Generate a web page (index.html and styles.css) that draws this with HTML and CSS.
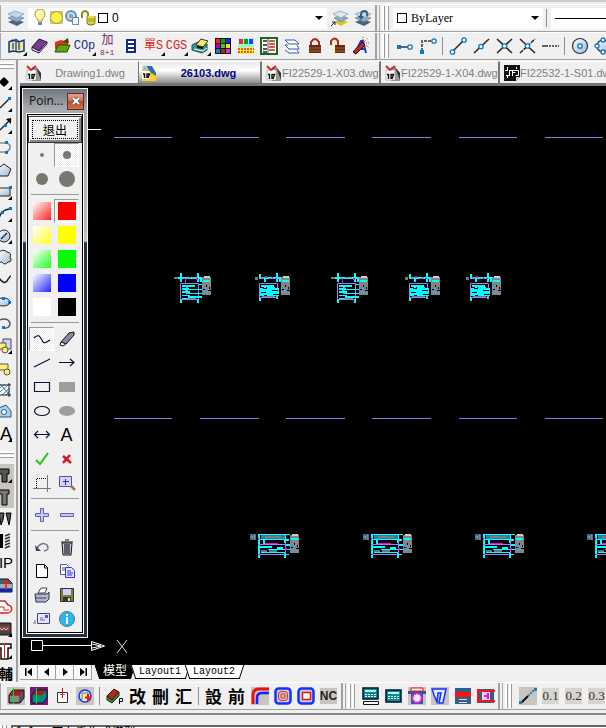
FILE: index.html
```html
<!DOCTYPE html>
<html lang="zh-Hant">
<head>
<meta charset="utf-8">
<title>26103.dwg</title>
<link rel="stylesheet" href="styles.css">
</head>
<body>
<svg class="defs" aria-hidden="true">
  <defs>
    <linearGradient id="steel" x1="0" y1="0" x2="1" y2="1"><stop offset="0" stop-color="#fff"/><stop offset="1" stop-color="#9db7d2"/></linearGradient>
    <symbol id="sheets" viewBox="0 0 18 18"><path d="M1 13l7-3 9 3-7 4z" fill="#49657f"/><path d="M1 9l7-3 9 3-7 4z" fill="#8faac0" stroke="#5f7a92" stroke-width=".6"/><path d="M1 5l7-3 9 3-7 4z" fill="#c5d7e4" stroke="#7790a6" stroke-width=".6"/></symbol>
    <symbol id="dwg" viewBox="0 0 16 16"><path d="M6 2h4l5 6v8H6z" fill="#999"/><path d="M10 2l5 6v7z" fill="#333"/><path d="M1 5h9v10H1z" fill="#fff" stroke="#999" stroke-width=".6"/><path d="M2 9.500h1.500V14M6 14V9.500h2.500L7 14" fill="none" stroke="#111" stroke-width="1.400"/><path d="M1 1l4 4 5-4" fill="none" stroke="#d2232a" stroke-width="1.800"/></symbol>
    <g id="panel"><path d="M0 1h9v18H0z" fill="#858585"/><path d="M2 0h6v2H2z" fill="#d0ccc8"/><path d="M1 4h7v2H1z" fill="#0ff"/><path d="M0 8h1v5H0zM2 12h4v1H2zM1 15h5v2H1z" fill="#5c94d0"/><path d="M4 9h1v2H4zM7 11h1v2H7zM1 13h2v1H1zM6 14h3v1H6z" fill="#000"/></g>
    <g id="unitStripe">
      <path d="M-6 4h4v2h-4z" fill="#6c7c8c"/><path d="M-2 4h26v2H-2zM0 0h2v9H0zM17 0h2v9h-2zM20 6h3v3h-3zM0 26h2v4H0zM17 26h2v4h-2z" fill="#0ff"/>
      <path d="M3 5h5v1H3zM12 4h3v1h-3z" fill="#8090a0"/><path d="M5 6h1v4H5zM9 4h2v1H9zM16 5h2v2h-2z" fill="#f0f"/>
      <path d="M.5 10.500h18v16H.5z" fill="none" stroke="#9a80ff"/><path d="M2 12h13v2H2zM2 15h7v2H2zM9 16h13v1H9zM2 18h8v2H2zM8 20h14v1H8zM2 22h8v1H2zM8 23h14v2H8zM2 25h6v1H2zM19 11h3v1h-3z" fill="#0ff"/><path d="M6 14h2v1H6zM5 17h3v1H5zM6 20h2v1H6z" fill="#9a80ff"/><path d="M8 25h8v1H8z" fill="#777"/>
      <use href="#panel" x="22" y="3"/>
    </g>
    <g id="unitFull">
      <path d="M-4 4h3v3h-3z" fill="#6c7c8c"/><path d="M0 4h22v2H0zM0 1h2v5H0zM17 0h2v9h-2zM5 6h2v3H5zM20 5h2v4h-2zM0 24h2v4H0zM17 23h2v3h-2z" fill="#0ff"/>
      <path d="M2 4h3v2H2zM10 5h5v1h-5z" fill="#8090a0"/><path d="M6 3h2v2H6zM13 4h1v1h-1zM16 5h2v1h-2z" fill="#f0f"/>
      <path d="M.5 10.500h18v14H.5z" fill="none" stroke="#9a80ff"/><path d="M2 12h13v2H2zM1 15h19v8H1zM8 14h8v1H8z" fill="#0ff"/><path d="M4 15h4v1H4zM2 19h5v1H2zM13 17h6v1h-6zM14 21h7v1h-7zM5 22h3v1H5z" fill="#000"/><path d="M3 23h13v1H3z" fill="#777"/><path d="M5 14h2v1H5zM17 15h2v2h-2z" fill="#c8b8ff"/>
      <use href="#panel" x="22" y="3"/>
    </g>
    <g id="rack">
      <path d="M-8 0h6v6h-6z" fill="#4a6c90"/><path d="M-7 2h2v2h-2zM-4 1h1v4h-1z" fill="#8a9098"/>
      <path d="M0 0h32v1H0zM0 0h2v24H0zM0 5h27v1H0zM26 1h2v8h-2zM26 18h2v6h-2zM28 5h3v2h-3zM5 6h2v4H5z" fill="#0ff"/><path d="M3 1h24v4H3z" fill="#4c719b"/><path d="M7 2h16v2H7z" fill="#777f86"/>
      <path d="M0 10.500h31M0 20.500h28M27.500 8v13" stroke="#9a80ff"/><path d="M1 12h13v2H1zM19 13h6v2h-6zM10 15h22v1H10zM3 18h24v1H3zM28 10h4v2h-4zM27 20h4v1h-4z" fill="#0ff"/><path d="M7 9h13v1H7zM0 4h1v2H0zM0 20h2v1H0zM27 14h2v2h-2z" fill="#f0f"/><path d="M3 16h6v2H3zM11 16h8v2h-8z" fill="#5a79a0"/>
      <use href="#panel" x="32"/>
    </g>
  </defs>
</svg>

<header class="bars">
  <div class="bar">
    <section class="group group-main">
      <button class="tool" aria-label="Layer properties"><svg><use href="#sheets"/></svg></button>
      <div class="combo combo-layer">
        <svg viewBox="0 0 16 18"><path d="M6 12c0-3-3-3-3-7a5 5 0 0 1 10 0c0 4-3 4-3 7z" fill="#fff9a0" stroke="#a09040"/><path d="M6 13h4v3H6z" fill="#7888a0"/><path d="M5 6q1-3 3-3" stroke="#fff" fill="none"/></svg>
        <svg viewBox="0 0 16 18"><path d="M2 2h13v13H2z" fill="#dfc95a"/><circle cx="8.500" cy="8.500" r="6" fill="#ffee45" stroke="#50907c" stroke-width=".8"/></svg>
        <svg viewBox="0 0 16 18"><circle cx="7" cy="7" r="5" fill="#c7d8e7" stroke="#6b93b8" stroke-width="2"/><circle cx="7" cy="7" r="2" fill="#7ca0bf"/><path d="M8.500 8.500h6v7h-6z" fill="#f8fafc" stroke="#71879c"/></svg>
        <svg viewBox="0 0 16 18"><path d="M2 9V4q3-4 6 0v6" fill="none" stroke="#8f8a25" stroke-width="2"/><ellipse cx="11" cy="14" rx="4" ry="2" fill="#d4cb30" stroke="#777212"/><path d="M7 7h8v7H7z" fill="#e7df4b"/><path d="M7 7v7M15 7v7M7 10h8M7 12h8" stroke="#8d871e"/></svg>
        <i class="swatch"></i>
        <select aria-label="Layer"><option>0</option></select>
        <svg class="caret" viewBox="0 0 8 4"><path d="M0 0h8L4 4z"/></svg>
      </div>
      <button class="tool" aria-label="Make layer current"><svg viewBox="0 0 18 18"><path d="M3 13l6-3 8 3-7 4z" fill="#d9c426"/><path d="M3 9l6-3 8 3-7 4z" fill="#8faac0" stroke="#5f7a92" stroke-width=".6"/><path d="M2 5l7-3 8 3-7 4z" fill="#dbe8ef" stroke="#7790a6" stroke-width=".6"/><path d="M0 17l4-4M1 13h3v3" stroke="#125" fill="none"/></svg></button>
      <button class="tool" aria-label="Layer previous"><svg viewBox="0 0 18 18"><use href="#sheets"/><path d="M7 8V6q0-4 4-4 3 1 2 5" fill="none" stroke="#315c84" stroke-width="2"/><path d="M4 7h6l-3 4z" fill="#315c84"/></svg></button>
    </section>
    <section class="group group-rest">
      <i class="grip"></i>
      <div class="combo combo-color"><i class="swatch"></i><select class="serif" aria-label="Colour"><option>ByLayer</option></select><svg class="caret" viewBox="0 0 8 4"><path d="M0 0h8L4 4z"/></svg></div>
      <i class="sep"></i>
      <div class="combo combo-line"><i class="rule"></i><select aria-label="Linetype"><option></option></select></div>
    </section>
  </div>
  <div class="bar">
    <section class="group group-main">
      <button class="tool fly" aria-label="Library"><svg viewBox="0 0 18 18"><path d="M2 5l4-2 6 2 5-2v11l-5 1-6-1-4 1z" fill="#ffe873" stroke="#113292" stroke-width="1.500"/><path d="M9 3v11M6 6v6M12 6v7" stroke="#175bc4" stroke-width="1.500"/><path d="M5 5l4-3 4 3" fill="none" stroke="#113292"/></svg></button>
      <button class="tool" aria-label="Erase"><svg viewBox="0 0 18 18"><path d="M2 10l7-8 8 3-8 9z" fill="#783a91" stroke="#321547"/><path d="M2 10v3l7 3 8-9V5l-8 9z" fill="#dacce2" stroke="#321547"/></svg></button>
      <button class="tool" aria-label="Open"><svg viewBox="0 0 18 18"><path d="M2 5l6-2 7 2v7H2z" fill="#e7330e"/><path d="M9 5l6-4 1 5z" fill="#251"/><path d="M2 15l3-7h12l-3 7z" fill="#5ba812" stroke="#254d0a"/></svg></button>
      <button class="tool glyph blue fly">COp</button>
      <button class="tool glyph cjk violet">加<small>8+1</small></button>
      <button class="tool" aria-label="List"><svg viewBox="0 0 18 18"><path d="M5 3h8v12H5zM5 7h8M5 11h8" fill="#fff" stroke="#102a86" stroke-width="2"/></svg></button>
      <button class="tool glyph cjk red fly">單S</button>
      <button class="tool glyph red fly">CGS</button>
      <button class="tool fly" aria-label="Print"><svg viewBox="0 0 18 18"><path d="M1 8l6-3 9 2v6l-5 3-10-3z" fill="#3d8f92" stroke="#155"/><path d="M5 8l5-6 7 2-5 6z" fill="#ffe96a" stroke="#332"/><path d="M6 10l6 1" stroke="#111" stroke-width="2"/><path d="M3 12l9 2 4-3" stroke="#fff" fill="none"/></svg></button>
      <button class="tool" aria-label="Colour map"><svg viewBox="0 0 18 18"><path d="M1 1h16v16H1z" fill="#121212"/><path d="M2 2h4v4H2z" fill="#f22"/><path d="M7 2h4v4H7z" fill="#0a0"/><path d="M12 2h4v4h-4z" fill="#22f"/><path d="M2 7h4v4H2z" fill="#b0a"/><path d="M7 7h4v4H7z" fill="#3c3"/><path d="M12 7h4v4h-4z" fill="#fd0"/><path d="M2 12h4v4H2z" fill="#08c"/><path d="M7 12h4v4H7z" fill="#930"/><path d="M12 12h4v4h-4z" fill="#e2e"/></svg></button>
      <button class="tool" aria-label="Colour bands"><svg viewBox="0 0 18 18"><path d="M1 1h16v16H1z" fill="#ffeb35"/><path d="M1 1h16v7H1z" fill="#9ff"/><path d="M2 2h4v5H2z" fill="#f22"/><path d="M7 2h4v5H7z" fill="#169516"/><path d="M12 2h4v5h-4z" fill="#33f"/><path d="M1 9h16" stroke="#7ff" stroke-width="2"/><path d="M1 12h16M1 15h16" stroke="#e3262b" stroke-width="1.500" stroke-dasharray="2 1"/></svg></button>
      <button class="tool" aria-label="Table"><svg viewBox="0 0 18 18"><path d="M1 1h16v16H1z" fill="#fff" stroke="#17691e" stroke-width="2"/><path d="M3 4h4M3 8h4M3 12h4M3 15h4" stroke="#555" stroke-width="2"/><path d="M9 4h6M9 7h6M9 10h6M9 13h6" stroke="#d55" stroke-width="2"/><path d="M8 2v14" stroke="#555"/></svg></button>
      <button class="tool" aria-label="Layers"><svg viewBox="0 0 18 18"><path d="M2 3h10l4 4H6zM2 8h3M2 8l4 4h10l-2-4M2 13l4 3h10l-2-3" fill="#fff" stroke="#315cb6"/></svg></button>
      <button class="tool" aria-label="Lock"><svg viewBox="0 0 18 18"><path d="M5 9V5q4-6 8 0v4" fill="none" stroke="#a92a22" stroke-width="2"/><path d="M3 8h12v8H3z" fill="#662a14"/><path d="M3 11h12M3 14h12" stroke="#9b6731"/></svg></button>
      <button class="tool" aria-label="Unlock"><svg viewBox="0 0 18 18"><path d="M2 1h15v16H2z" fill="#f5edd6"/><path d="M2 8V4q4-5 7 0v4" fill="none" stroke="#a92a22" stroke-width="2"/><path d="M6 8h10v8H6z" fill="#662a14"/><path d="M6 11h10M6 14h10" stroke="#9b6731"/></svg></button>
      <button class="tool" aria-label="Match text"><svg viewBox="0 0 18 18"><path d="M3 16L9 4h2l3 12M6 12h7" fill="none" stroke="#133dd1" stroke-width="2"/><path d="M1 15L10 5l3 3-9 9z" fill="#b12b23" stroke="#401"/><path d="M12 5l4-4M14 6h4M11 3V0M14 8l3 3" stroke="#d32" stroke-dasharray="1 1"/></svg></button>
    </section>
    <section class="group group-rest">
      <i class="grip"></i>
      <button class="tool" aria-label="Temporary track"><svg viewBox="0 0 18 18"><path d="M4 10h8" stroke="#333" stroke-width="1.500"/><path d="M1 8h4v4H1z" fill="#0878c8"/><circle cx="14" cy="10" r="2.200" class="node"/></svg></button>
      <button class="tool" aria-label="Snap from"><svg viewBox="0 0 18 18"><path d="M3 14V4h10" fill="none" stroke="#333" stroke-width="1.500" stroke-dasharray="3 1"/><path d="M1 13h4v4H1z" fill="#0878c8"/><circle cx="15" cy="4" r="2.200" class="node"/></svg></button>
      <i class="sep"></i>
      <button class="tool" aria-label="Endpoint"><svg viewBox="0 0 18 18"><path d="M3 15L15 3" stroke="#222" stroke-width="1.500"/><circle cx="3.500" cy="15" r="2.200" class="node"/><circle cx="15" cy="3" r="2.200" class="node"/></svg></button>
      <button class="tool" aria-label="Midpoint"><svg viewBox="0 0 18 18"><path d="M2 16L17 2" stroke="#222" stroke-width="1.500"/><circle cx="9" cy="9.500" r="2.200" class="node"/></svg></button>
      <button class="tool" aria-label="Intersection"><svg viewBox="0 0 18 18"><path d="M2 2l15 14M2 16L17 2" stroke="#222" stroke-width="1.500"/><circle cx="9.500" cy="9" r="2.200" class="node"/></svg></button>
      <button class="tool" aria-label="Apparent intersection"><svg viewBox="0 0 18 18"><path d="M2 2l15 14" stroke="#222" stroke-width="1.500"/><path d="M2 16L17 2" stroke="#222" stroke-width="1.500" stroke-dasharray="4 1"/><circle cx="9.500" cy="9" r="2.200" class="node"/></svg></button>
      <button class="tool" aria-label="Extension"><svg viewBox="0 0 18 18"><path d="M1 9h6" stroke="#333" stroke-width="1.500"/><path d="M8 9h10" stroke="#333" stroke-width="1.500" stroke-dasharray="2 1"/></svg></button>
      <i class="sep"></i>
      <button class="tool" aria-label="Centre"><svg viewBox="0 0 18 18"><circle cx="9" cy="9" r="7.500" fill="url(#steel)" stroke="#233646" stroke-width="1.200"/><circle cx="9" cy="9" r="2.200" class="node"/></svg></button>
      <button class="tool" aria-label="Quadrant"><svg viewBox="0 0 18 18"><circle cx="9" cy="9" r="6" fill="url(#steel)" stroke="#233646" stroke-width="1.200"/><g class="node"><circle cx="9" cy="3" r="2"/><circle cx="15" cy="9" r="2"/><circle cx="9" cy="15" r="2"/><circle cx="3" cy="9" r="2"/></g></svg></button>
    </section>
  </div>
</header>

<main class="work">
  <aside class="side">
    <div class="hgrip"></div>
    <button aria-label="Point"><svg viewBox="0 0 14 22"><circle cx="4" cy="11" r="3.500"/><path d="M4 6l5 5-5 5-5-5z"/></svg></button>
    <button aria-label="Line"><svg viewBox="0 0 14 22"><path d="M0 15L9 6" class="ink"/><path d="M8 4h3v3H8z" class="pt"/></svg></button>
    <button aria-label="Ray"><svg viewBox="0 0 14 22"><path d="M0 15L11 4" class="ink"/><path d="M11 3v6L6 4z"/><path d="M4 9h3v3H4z" class="pt"/></svg></button>
    <button aria-label="Polyline" class="plain"><svg viewBox="0 0 14 22"><path d="M0 6h6q5 1 4 5t-6 4H0" fill="none" stroke="#888" stroke-width="1.500"/><path d="M5 4h3v3H5zM5 14h3v3H5z" class="pt"/></svg></button>
    <button aria-label="Polygon" class="plain"><svg viewBox="0 0 14 22"><path d="M4 5l7 5-3 7H0l-3-7z" fill="url(#steel)" stroke="#222"/></svg></button>
    <button aria-label="Rectangle"><svg viewBox="0 0 14 22"><path d="M-2 7h12v8H-2z" fill="url(#steel)" stroke="#222"/><path d="M9 5h3v3H9z" class="pt"/></svg></button>
    <button aria-label="Arc"><svg viewBox="0 0 14 22"><path d="M-1 16Q0 7 10 6" class="ink"/><path d="M9 4h3v3H9zM1 8h3v3H1z" class="pt"/></svg></button>
    <button aria-label="Circle"><svg viewBox="0 0 14 22"><circle cx="4" cy="11" r="6" fill="url(#steel)" stroke="#222"/><path d="M1 14l6-6" class="ink"/><path d="M3 10h2v2H3z" class="pt"/></svg></button>
    <button aria-label="Revision cloud" class="plain"><svg viewBox="0 0 14 22"><path d="M-2 6q5-5 9-1 5 1 3 5 3 5-2 5-3 4-6 0-4 1-4-3z" fill="url(#steel)" stroke="#222"/></svg></button>
    <button aria-label="Spline" class="plain"><svg viewBox="0 0 14 22"><path d="M-1 9q5 7 8 3 3-5 4-5" class="ink"/></svg></button>
    <button aria-label="Ellipse" class="plain"><svg viewBox="0 0 14 22"><ellipse cx="3" cy="11" rx="7" ry="4" fill="url(#steel)" stroke="#222"/><path d="M8 10h3v3H8zM2 6h3v3H2z" class="pt"/></svg></button>
    <button aria-label="Ellipse arc" class="plain"><svg viewBox="0 0 14 22"><path d="M-1 7q9-3 11 3 0 6-7 5" fill="#e9eff6" stroke="#555" stroke-width="1.500"/><path d="M2 13h3v3H2z" class="pt"/></svg></button>
    <button aria-label="Insert block"><svg viewBox="0 0 14 22"><path d="M3 4h8v10H3z" fill="#c7d9ea" stroke="#446"/><path d="M-1 8h7v6h-7z" fill="#ffec75" stroke="#554"/><circle cx="5" cy="15" r="3" fill="#ffec75" stroke="#554"/></svg></button>
    <button aria-label="Make block" class="plain"><svg viewBox="0 0 14 22"><path d="M-1 7h9v6h-9z" fill="#ffec75" stroke="#554"/><circle cx="7" cy="15" r="3" fill="#ffec75" stroke="#554"/></svg></button>
    <button aria-label="Hatch" class="plain"><svg viewBox="0 0 14 22"><path d="M0 6h9v9H0z" fill="#fff"/><path d="M0 9l5-4M0 13l9-8M2 16l8-7M6 16l4-4M0 5l10 11" stroke="#367ab8"/><path d="M-1 6h12M-1 16h12M9 4v14" stroke="#222"/></svg></button>
    <button aria-label="Region" class="plain"><svg viewBox="0 0 14 22"><path d="M-1 16V7l7-3 5 6v6z" fill="#aecde8" stroke="#235989"/><circle cx="4" cy="11" r="2.500" fill="#fff" stroke="#235989"/></svg></button>
    <button class="letter">A</button>
    <div class="hgrip hgrip-lower"></div>
    <button aria-label="Bolt"><svg viewBox="0 0 14 22" class="shade"><path d="M-1 5h10v5H7v8H2v-8h-3z" fill="#555" stroke="#000"/></svg></button>
    <button aria-label="Pin" class="plain"><svg viewBox="0 0 14 22" class="shade"><path d="M-1 4h10v4H7v11H2V8h-3z" fill="#777" stroke="#000"/></svg></button>
    <button aria-label="Taps" class="plain"><svg viewBox="0 0 14 22"><path d="M-1 5h5l-1 7-2 5zM6 5h5l-1 7-1 5z" fill="#555" stroke="#000"/></svg></button>
    <button aria-label="Spring" class="plain"><svg viewBox="0 0 14 22"><path d="M0 4h3v14H0z"/><path d="M5 6l5-2M5 9l5-2M5 12l5-2M5 15l5-2M5 18l5-2" stroke="#333" stroke-width="1.500"/></svg></button>
    <button class="letter plain mark">IP</button>
    <button aria-label="Raise" class="plain"><svg viewBox="0 0 14 22"><path d="M-1 5h9l4 4v9H-1z" fill="#23706f" stroke="#013"/><path d="M-1 15h12v2H-1z" fill="#11f"/><path d="M0 10h12v4H0z" fill="#aaa"/><path d="M6 16V6M3 9l3-3 3 3" fill="none" stroke="#f11" stroke-width="1.500"/></svg></button>
    <button aria-label="Profile" class="plain"><svg viewBox="0 0 14 22"><path d="M-1 5h6l3 4q5 1 3 6-1 2-4 2h-8" fill="#fff" stroke="#d22" stroke-width="1.500"/><path d="M-1 11h5v3h5" fill="none" stroke="#d22"/></svg></button>
    <button aria-label="Plate"><svg viewBox="0 0 14 22"><path d="M-1 5h12v12H-1z" fill="#444" stroke="#111"/><path d="M-1 8h11v5H-1z" fill="#844"/><path d="M0 10l2 2 2-2 2 2 2-2" stroke="#ccc" fill="none"/></svg></button>
    <button aria-label="Section"><svg viewBox="0 0 14 22"><path d="M-1 4h12v4H8v11H1V8h-2z" fill="#fff" stroke="#111" stroke-width="1.500"/><path d="M4.500 3v16" stroke="#f11"/></svg></button>
    <button class="letter assist">輔</button>
  </aside>

  <section class="document">
    <nav class="tabs">
      <a href="#" class="tab"><svg><use href="#dwg"/></svg><span>Drawing1.dwg</span></a>
      <a href="#" class="tab active"><svg viewBox="0 0 16 16"><path d="M1 4h10l4 5v7H1z" fill="#ffd21c"/><path d="M5 1h6l4 7v3l-6-4z" fill="#2d6fab"/><path d="M1 6h8v8H1z" fill="#fff"/><path d="M2 9h1.500v4M6 13V9h2.500L7 13" fill="none" stroke="#111" stroke-width="1.500"/><path d="M4 0v6M1 3h6M2 1l4 4M6 1L2 5" stroke="#8ab6dc"/></svg><span>26103.dwg</span></a>
      <a href="#" class="tab tight"><svg><use href="#dwg"/></svg><span>FI22529-1-X03.dwg</span></a>
      <a href="#" class="tab tight"><svg><use href="#dwg"/></svg><span>FI22529-1-X04.dwg</span></a>
      <a href="#" class="tab tight"><svg viewBox="0 0 16 16"><path d="M0 0h16v12l-4 4H0z" fill="#111"/><path d="M1 5.500h3M3.500 2v4M12.500 2v2M5.500 5.500h9v5h-3M5.500 5v6M8.500 7.500h3M8.500 5v6M2 10.500h3M3.500 10v3" fill="none" stroke="#fff"/><path d="M12 16v-4h4z" fill="#ddd"/></svg><span>FI22532-1-S01.dwg</span></a>
    </nav>

    <div class="canvas">
      <svg class="drawing" role="img" aria-label="Model space drawing">
        <g transform="translate(-20 -86)">
          <path d="M88 129.500h13" stroke="#fff"/>
          <path id="axis" d="M114 137.500h58M200 137.500h59M286 137.500h59M372 137.500h59M459 137.500h58M545 137.500h58" stroke="#8f78ec"/>
          <use href="#axis" y="281"/>
          <use href="#unitStripe" x="180" y="273"/>
          <use href="#unitFull" x="259" y="273"/>
          <use href="#unitStripe" x="337" y="273"/>
          <use href="#unitFull" x="409" y="273"/>
          <use href="#unitFull" x="470" y="273"/>
          <use href="#rack" x="258" y="534"/>
          <use href="#rack" x="371" y="534"/>
          <use href="#rack" x="483" y="534"/>
          <use href="#rack" x="595" y="534"/>
          <path d="M31.500 640.500h11v10h-11zM43 645.500h48" fill="none" stroke="#fff"/>
          <path d="M91.500 641.500v9l13-4.500zM92 644l9 2M92 648l9-2" fill="none" stroke="#fff"/>
          <path d="M117 640l10 13M127 640l-10 13" stroke="#ddd"/>
        </g>
      </svg>

      <aside class="palette" aria-label="Pointer tools">
        <header class="title"><span>Poin...</span><button aria-label="Close"><svg viewBox="0 0 8 8"><path d="M1 1l6 6M7 1L1 7" stroke="#554" stroke-width="3.500"/><path d="M1 1l6 6M7 1L1 7" stroke="#fff" stroke-width="2"/></svg></button></header>
        <div class="body">
          <button class="exit"><span>退出</span></button>
          <div class="cells">
            <button aria-label="Dot 4"><svg viewBox="0 0 18 18"><circle cx="9" cy="9" r="2" class="dot"/></svg></button>
            <button aria-label="Dot 8" class="on"><svg viewBox="0 0 18 18"><circle cx="9" cy="9" r="4" class="dot"/></svg></button>
            <button aria-label="Dot 12"><svg viewBox="0 0 18 18"><circle cx="9" cy="9" r="6" class="dot"/></svg></button>
            <button aria-label="Dot 16"><svg viewBox="0 0 18 18"><circle cx="9" cy="9" r="8" class="dot"/></svg></button>
          </div>
          <hr>
          <div class="cells">
            <button aria-label="Light red"><i class="ink-box fade-red"></i></button><button aria-label="Red" class="on"><i class="ink-box red-box"></i></button>
            <button aria-label="Light yellow"><i class="ink-box fade-yellow"></i></button><button aria-label="Yellow"><i class="ink-box yellow-box"></i></button>
            <button aria-label="Light green"><i class="ink-box fade-green"></i></button><button aria-label="Green"><i class="ink-box green-box"></i></button>
            <button aria-label="Light blue"><i class="ink-box fade-blue"></i></button><button aria-label="Blue"><i class="ink-box blue-box"></i></button>
            <button aria-label="White"><i class="ink-box white-box"></i></button><button aria-label="Black"><i class="ink-box black-box"></i></button>
          </div>
          <hr>
          <div class="cells">
            <button aria-label="Freehand" class="on"><svg viewBox="0 0 18 18"><path d="M1 8q4-4 6-1t3 5 7-2" class="pen"/></svg></button>
            <button aria-label="Eraser"><svg viewBox="0 0 18 18"><path d="M3 12l8-9 5-1v3l-8 9z" fill="#889" stroke="#112"/><path d="M3 12l5 2-3 2-3-1z" fill="#fff" stroke="#112"/></svg></button>
            <button aria-label="Line"><svg viewBox="0 0 18 18"><path d="M1 13L17 5" class="pen"/></svg></button>
            <button aria-label="Arrow"><svg viewBox="0 0 18 18"><path d="M1 8.500h15M12 5l4 3.500-4 3.500" class="pen"/></svg></button>
            <button aria-label="Box"><svg viewBox="0 0 18 18"><path d="M1.500 4.500h15v9h-15z" class="pen"/></svg></button>
            <button aria-label="Filled box"><svg viewBox="0 0 18 18"><path d="M1 4h16v10H1z" fill="#9d9d9d"/></svg></button>
            <button aria-label="Oval"><svg viewBox="0 0 18 18"><ellipse cx="9" cy="9" rx="7.500" ry="4.500" class="pen"/></svg></button>
            <button aria-label="Filled oval"><svg viewBox="0 0 18 18"><ellipse cx="9" cy="9" rx="8" ry="5" fill="#9d9d9d"/></svg></button>
            <button aria-label="Double arrow"><svg viewBox="0 0 18 18"><path d="M2 8.500h14M5 5L1.500 8.500 5 12M13 5l3.500 3.500L13 12" class="pen"/></svg></button>
            <button class="text-tool">A</button>
            <button aria-label="Tick"><svg viewBox="0 0 18 18"><path d="M3 10l4 4 8-11" fill="none" stroke="#1fc41f" stroke-width="2"/></svg></button>
            <button aria-label="Cross"><svg viewBox="0 0 18 18"><path d="M5 6l8 7M12 5l-7 8" fill="none" stroke="#d7141a" stroke-width="2.500"/></svg></button>
            <button aria-label="Crop"><svg viewBox="0 0 18 18"><path d="M0 14.500h18M14.500 1v17" stroke="#777"/><path d="M3.500 14V4.500H14" fill="none" stroke="#000" stroke-dasharray="1 1"/></svg></button>
            <button aria-label="Zoom"><svg viewBox="0 0 18 18"><path d="M1.500 2.500h12v10h-12z" fill="#d4d4fb" stroke="#52549a"/><path d="M5 7.500h6M7.500 5v6" stroke="#339"/><path d="M13 12l4 4" stroke="#967a4e" stroke-width="2.500"/></svg></button>
          </div>
          <hr>
          <div class="cells">
            <button aria-label="Increase"><svg viewBox="0 0 18 18"><path d="M7.500 2.500h3v5h5v3h-5v5h-3v-5h-5v-3h5z" class="lilac"/></svg></button>
            <button aria-label="Decrease"><svg viewBox="0 0 18 18"><path d="M2.500 7.500h13v3h-13z" class="lilac"/></svg></button>
          </div>
          <hr>
          <div class="cells">
            <button aria-label="Undo"><svg viewBox="0 0 18 18"><path d="M4 10q5-7 10-3 3 5-3 6" fill="none" stroke="#66749b" stroke-width="1.500"/><path d="M2 7l1 6h5z" fill="#445"/></svg></button>
            <button aria-label="Delete"><svg viewBox="0 0 18 18"><path d="M4 5h10l-1 12H5z" fill="#ccd" stroke="#112"/><path d="M3 4h12M7 2h4M7 6v10M9 6v10M11 6v10" stroke="#112" stroke-width="1.200"/></svg></button>
            <button aria-label="New"><svg viewBox="0 0 18 18"><path d="M3.500 2.500h8l3 3v10h-11z" fill="#fff" stroke="#000"/><path d="M11.500 3v3h3" fill="none" stroke="#000"/></svg></button>
            <button aria-label="Copy"><svg viewBox="0 0 18 18"><path d="M2.500 2.500h6l2 2v8h-8z" fill="#fff" stroke="#557"/><path d="M4 6h3M4 8h3" stroke="#557"/><path d="M7.500 5.500h6l3 3v7h-9z" fill="#e4e4ff" stroke="#33f"/><path d="M9 9h4M9 11h6M9 13h5" stroke="#33c"/></svg></button>
            <button aria-label="Print"><svg viewBox="0 0 18 18"><path d="M5 7l3-5h6l-2 5z" fill="#fff" stroke="#445"/><path d="M2 8h12l2-2v7l-3 3H3z" fill="#aab6d4" stroke="#334"/><path d="M3 12h10" stroke="#445"/><path d="M9 10h3" stroke="#dc3"/></svg></button>
            <button aria-label="Save"><svg viewBox="0 0 18 18"><path d="M2.500 2.500h13v13h-13z" fill="#857f2a" stroke="#333"/><path d="M5 3h8v6H5z" fill="#cfcfff"/><path d="M5 11h8v5H5z" fill="#333"/><path d="M10 12h2v3h-2z" fill="#ddd"/></svg></button>
            <button aria-label="Mail"><svg viewBox="0 0 18 18"><path d="M4.500 3.500h12v10h-12z" fill="#e4e4ff" stroke="#447"/><path d="M12 5h3v3h-3z" fill="#55b"/><path d="M7 8h3M7 10h5M0 13h3M1 11h2" stroke="#669"/></svg></button>
            <button aria-label="About"><svg viewBox="0 0 18 18"><circle cx="9" cy="9" r="7.500" fill="#29b6f4" stroke="#577"/><path d="M8 4h2v2H8zM8 7h2v7H8z" fill="#fff"/></svg></button>
          </div>
        </div>
      </aside>
    </div>

    <nav class="layouts">
      <button aria-label="First"><svg viewBox="0 0 8 8"><path d="M0 0h1.500v8H0zM7 0v8L2 4z"/></svg></button>
      <button aria-label="Previous"><svg viewBox="0 0 8 8"><path d="M6 0v8L1 4z"/></svg></button>
      <button aria-label="Next"><svg viewBox="0 0 8 8"><path d="M2 0v8l5-4z"/></svg></button>
      <button aria-label="Last"><svg viewBox="0 0 8 8"><path d="M6.500 0H8v8H6.500zM1 0v8l5-4z"/></svg></button>
      <a href="#" class="sheet current">模型</a>
      <a href="#" class="sheet">Layout1</a>
      <a href="#" class="sheet">Layout2</a>
    </nav>
  </section>
</main>

<footer class="bottom">
  <div class="bar">
    <section class="group group-part">
      <button class="tool" aria-label="Block"><svg viewBox="0 0 18 18" class="shade"><path d="M2 8l4-5h11v8l-4 5H2z" fill="#555" stroke="#111"/><path d="M3 8l4-4h9l-4 4z" fill="#b11"/><path d="M3 9h9v6H3z" fill="#888"/><path d="M6.500 1v16" stroke="#1d1"/></svg></button>
      <button class="tool" aria-label="Pocket"><svg viewBox="0 0 18 18"><path d="M0 0h18v18H0z" fill="#80117f"/><path d="M2 8l4-5h11v8l-4 5H2z" fill="#0a8685" stroke="#111"/><path d="M3 8l4-4h9l-4 4z" fill="#b11"/><path d="M6.500 1v16" stroke="#1d1"/></svg></button>
      <button class="tool" aria-label="Origin"><svg viewBox="0 0 18 18"><path d="M4.500 5.500h10v10h-10z" fill="#fff" stroke="#333"/><path d="M9.500 1v10" stroke="#d11"/><path d="M7 7.500h5" stroke="#777"/></svg></button>
      <button class="tool" aria-label="Circle part"><svg viewBox="0 0 18 18" class="shade"><circle cx="9" cy="9" r="6" fill="#ffe994" stroke="#13f" stroke-width="1.500"/><path d="M6 13V6h6v5" fill="none" stroke="#28c"/><path d="M9 10.500h6M12 7v7" stroke="#e11" stroke-width="2"/></svg></button>
      <i class="sep"></i>
      <button class="tool" aria-label="Plates"><svg viewBox="0 0 18 18"><path d="M1 9l7-7 5 3-7 8z" fill="#b12b12" stroke="#222"/><path d="M1 9v4l5 3 7-7V5l-7 8z" fill="#448820" stroke="#222"/><path d="M13.500 17v-5.500h3v3h-3" fill="none" stroke="#111"/></svg></button>
      <button class="tool brush">改</button>
      <button class="tool brush">刪</button>
      <button class="tool brush">汇</button>
      <i class="sep"></i>
      <button class="tool brush">設</button>
      <button class="tool brush">前</button>
      <button class="tool" aria-label="Corner"><svg viewBox="0 0 18 18" class="shade"><path d="M2 17V8q0-6 6-6h10" fill="none" stroke="#e11" stroke-width="3"/><path d="M6 17v-6q0-5 5-5h7" fill="none" stroke="#12f" stroke-width="2.500"/></svg></button>
      <button class="tool" aria-label="Round pocket"><svg viewBox="0 0 18 18"><rect x="1.500" y="1.500" width="15" height="15" rx="3" fill="#ccc" stroke="#13f" stroke-width="2.500"/><rect x="4.500" y="4.500" width="9" height="9" rx="3" fill="none" stroke="#e11"/><rect x="7" y="7" width="4" height="4" rx="1" fill="none" stroke="#e11"/></svg></button>
      <button class="tool" aria-label="Square pocket"><svg viewBox="0 0 18 18"><rect x="1.500" y="1.500" width="15" height="15" rx="3" fill="#ccc" stroke="#13f" stroke-width="2.500"/><path d="M5.500 5.500h8v7h-8z" fill="#fff" stroke="#e11" stroke-width="1.500"/></svg></button>
      <button class="tool nc"><span>NC</span></button>
    </section>
    <section class="group group-calc">
      <i class="grip"></i>
      <button class="tool" aria-label="Calculator"><svg viewBox="0 0 18 18"><path d="M1 1h15v11H1z" fill="#098e8d" stroke="#013" stroke-width="1.500"/><path d="M3 3h11v2H3z" fill="#b9ffff"/><path d="M3 7.500h11M3 9.500h11" stroke="#dff" stroke-dasharray="2 1"/><path d="M1.500 14.500h15v3h-15z" fill="#fff" stroke="#111"/></svg></button>
      <button class="tool" aria-label="Keypad"><svg viewBox="0 0 18 18"><path d="M1 3h15v12H1z" fill="#098e8d" stroke="#013" stroke-width="1.500"/><path d="M3 5h11v2H3z" fill="#b9ffff"/><path d="M3 9.500h11M3 11.500h11" stroke="#dff" stroke-dasharray="2 1"/></svg></button>
      <button class="tool" aria-label="Stamp"><svg viewBox="0 0 18 18" class="shade"><path d="M0 4h18v3h-3v10H3V7H0z" fill="#315e8a"/><path d="M3 1h12v3H3z" fill="#fff" stroke="#e11"/><circle cx="9" cy="11" r="4.500" fill="#eee" stroke="#f0f" stroke-width="2" stroke-dasharray="2 1"/></svg></button>
      <button class="tool" aria-label="Angle"><svg viewBox="0 0 18 18" class="shade"><path d="M1 2h14l-3 14H8l2-10H7l-1 9-3-7z" fill="#e6ebfa" stroke="#13f" stroke-width="1.500"/></svg></button>
      <button class="tool" aria-label="Press"><svg viewBox="0 0 18 18"><path d="M1 1h16v16H1z" fill="#315e8a"/><path d="M1 5h16v5H1z" fill="#f11"/><path d="M5 12h8v1H5zM5 15h8v1H5z" fill="#ddd"/></svg></button>
      <button class="tool" aria-label="Clamp"><svg viewBox="0 0 18 18"><path d="M1 2h16v14H1z" fill="#315e8a"/><path d="M5 5h8v8H5z" fill="#ddd"/><path d="M0 4h18M0 14h18M1 2v14" stroke="#f11" stroke-width="2"/><path d="M11 6v6M7 9h4" stroke="#f0f" stroke-width="2"/></svg></button>
    </section>
    <section class="group group-rest">
      <i class="grip"></i>
      <button class="tool" aria-label="Offset"><svg viewBox="0 0 18 18" class="shade"><path d="M2 16l7-7" stroke="#111" stroke-width="2"/><path d="M9 9l7-7" stroke="#37a" stroke-width="2" stroke-dasharray="2 1"/><path d="M0 14h3v3H0zM15 1h3v3h-3z" fill="#37a"/></svg></button>
      <button class="tool step"><span>0.1</span></button>
      <button class="tool step"><span>0.2</span></button>
      <button class="tool step"><span>0.3</span></button>
    </section>
  </div>
  <div class="command"><i class="grip"></i><div class="log">命令: 正在重生成模型</div></div>
</footer>
</body>
</html>
```
FILE: styles.css
```css
* { box-sizing: border-box; }

body {
  margin: 0;
  height: 100vh;
  overflow: hidden;
  display: flex;
  flex-direction: column;
  background: #f0f0f0;
  color: #000;
  font: 12px/16px "Liberation Sans", "Noto Sans CJK SC", sans-serif;
}

button {
  margin: 0;
  padding: 0;
  border: 0;
  background: none;
  color: inherit;
  font: inherit;
}

a { color: inherit; text-decoration: none; }
svg { display: block; }
.defs { position: absolute; width: 0; height: 0; }

/* Toolbars */
.bars { flex: none; border-top: 2px solid #ccc; padding-top: 2px; }
.bar { display: flex; height: 28px; gap: 2px; border-top: 1px solid #fff; border-bottom: 1px solid #a0a0a0; overflow: hidden; }
.group { display: flex; align-items: center; flex: none; border-left: 1px solid #aaa; border-right: 2px solid #a0a0a0; }
.group-main { flex-basis: 377px; padding-left: 3px; }
.group-rest { flex: 1 0 0; min-width: 0; border-right: 0; padding-left: 2px; }
.group-part { flex-basis: 343px; padding-left: 3px; }
.group-calc { flex-basis: 155px; padding-left: 2px; }

.tool { flex: none; width: 23px; height: 22px; display: flex; align-items: center; justify-content: center; position: relative; white-space: nowrap; }
.tool svg { width: 18px; height: 18px; }
.fly::after {
  content: "";
  position: absolute;
  right: 0;
  bottom: 1px;
  border: 2px solid #000;
  border-top-color: transparent;
  border-left-color: transparent;
}
.grip { flex: none; width: 8px; height: 24px; margin-right: 3px; background: linear-gradient(90deg, #fff 2px, #999 2px 3px, #f0f0f0 3px 4px, #fff 4px 6px, #999 6px 7px, #f0f0f0 7px); }
.sep { flex: none; width: 1px; height: 18px; margin: 0 3px; background: #909090; }
.node { fill: #fff; stroke: #0878c8; stroke-width: 1.3; }
.shade { background: #c8c5c0; }

.glyph { font: 12px/22px "Liberation Mono", monospace; }
.cjk { font-family: "Liberation Mono", "Noto Sans CJK TC", monospace; }
.glyph small { position: absolute; left: 4px; bottom: 0; font-size: 8px; line-height: 8px; }
.violet { align-items: flex-start; color: #7b2173; line-height: 13px; }
.blue { color: #17338f; }
.red { color: #e0201a; }
.brush { font: bold 17px/22px "Noto Sans CJK TC", "Noto Sans CJK SC", serif; }
.nc { font: bold 12px/16px "Liberation Sans", sans-serif; color: #222; }
.nc span { background: #c8c5c0; }
.step { font: 13px/16px "Liberation Serif", serif; color: #333; }
.step span { background: #d8d5d0; }

/* Drop-downs */
.combo { display: flex; align-items: center; height: 21px; background: #fff; padding: 0 4px; }
.combo > svg { flex: none; width: 16px; height: 18px; }
.combo > .caret { width: 8px; height: 4px; }
.combo select { flex: 1; min-width: 0; appearance: none; border: 0; background: none; padding: 0 4px; font: inherit; color: #000; }
.combo .serif { font: 12px/16px "Liberation Serif", serif; }
.combo-layer { width: 299px; margin: 0 1px; }
.combo-layer .swatch { margin-left: 2px; }
.combo-color { width: 150px; }
.combo-line { flex: 1; margin-left: 1px; padding: 0; }
.combo-line .rule { flex: 1; height: 1px; margin-left: 4px; background: #000; }
.combo-line select { flex: 0; padding: 0; }
.swatch { flex: none; width: 10px; height: 10px; border: 1px solid #000; }

/* Side toolbar */
.work { flex: 1; min-height: 0; display: flex; gap: 2px; }
.side { flex: none; width: 18px; border-right: 2px solid #a0a0a0; overflow: hidden; }
.side button { position: relative; display: block; width: 14px; height: 22px; }
.side button::after { content: ""; position: absolute; right: 2px; bottom: 3px; border: 2px solid #000; border-top-color: transparent; border-left-color: transparent; }
.side button.plain::after { display: none; }
.side button svg { width: 14px; height: 22px; }
.side .shade { background: #c8c5c0; }
.ink { fill: none; stroke: #222; stroke-width: 1.5; }
.pt { fill: #0878c8; }
.side .letter { font-size: 18px; line-height: 22px; text-indent: -2px; }
.side .mark { font-size: 15px; }
.side .assist { font: bold 14px/22px "Noto Sans CJK TC", sans-serif; }
.hgrip { height: 8px; margin: 2px 2px 1px 0; background: linear-gradient(#fff 2px, #a0a0a0 2px 3px, #f0f0f0 3px 4px, #fff 4px 6px, #a0a0a0 6px 7px, #f0f0f0 7px); }
.hgrip-lower { margin-top: 6px; margin-bottom: 5px; }

/* Document tabs */
.document { flex: 1; min-width: 0; display: flex; flex-direction: column; }
.tabs { flex: none; height: 26px; padding-top: 1px; display: flex; border-bottom: 3px solid #777; overflow: hidden; }
.tab { flex: none; display: flex; align-items: center; width: 119px; border-top: 1px solid #fff; border-right: 2px solid #777; color: #808080; font-size: 11px; white-space: nowrap; }
.tab svg { flex: none; width: 16px; height: 16px; margin-left: 6px; }
.tab span { flex: 1; text-align: center; }
.tab:first-child { border-right-width: 1px; }
.tab.tight svg { margin-left: 4px; }
.tab.tight span { text-align: left; }
.tab.active { width: 123px; background: linear-gradient(#e8e8e8, #fff 40%, #8c8c8c); color: #000080; font-weight: bold; }
.tab.active svg { margin-left: 2px; }

/* Model space */
.canvas { flex: 1; min-height: 0; position: relative; background: #000; }
.drawing { width: 100%; height: 100%; }

.palette {
  position: absolute;
  left: 2px;
  top: 2px;
  width: 66px;
  padding: 0 3px 3px;
  border: 1px solid #f4f4f4;
  background: linear-gradient(#70767e, #a8abae 20px, #b8babc 140px, #c4c6c8 152px, #26323c 154px);
}
.title { height: 24px; display: flex; align-items: center; gap: 2px; padding-left: 3px; }
.title span { flex: 1; font: 12px/16px "Open Sans", sans-serif; color: #111; }
.title button { width: 17px; height: 17px; display: flex; align-items: center; justify-content: center; border: 1px solid #5b3028; background: linear-gradient(#e5a18c, #d0684c 50%, #c14828 50%, #d8704c); }
.title button svg { width: 8px; height: 8px; }
.body { border: 1px solid #fff; outline: 1px solid #000; outline-offset: -2px; padding: 2px 1px; background: #f0f0f0; }
.exit { display: block; width: 100%; height: 27px; padding: 3px; border: 1px solid #333; box-shadow: inset 1px 1px #fff, inset -2px -2px #888; }
.exit span { display: block; height: 19px; border: 1px dotted #000; font: 12px/17px "Noto Sans CJK SC", sans-serif; }
.cells { display: grid; grid-template-columns: 25px 25px; grid-auto-rows: 24px; margin-left: 1px; }
.cells button { display: flex; align-items: center; justify-content: center; border: 1px solid transparent; }
.cells svg { width: 18px; height: 18px; }
.cells .on { border-color: #999 #fff #fff #999; background: repeating-conic-gradient(#fff 0 25%, #ececec 0 50%) 0 0 / 2px 2px; }
.palette hr { height: 1px; margin: 3px 3px 4px; border: 0; background: #999; }
.dot { fill: #7a7770; }
.pen { fill: none; stroke: #10103c; stroke-width: 1.2; }
.lilac { fill: #c4c4ff; stroke: #6262a8; }
.cells .text-tool { font-size: 18px; line-height: 22px; }
.ink-box { width: 18px; height: 18px; }
.fade-red { background: linear-gradient(135deg, #fff, #f22); }
.fade-yellow { background: linear-gradient(135deg, #fff, #ff2); }
.fade-green { background: linear-gradient(135deg, #fff, #2f2); }
.fade-blue { background: linear-gradient(135deg, #fff, #22f); }
.red-box { background: #f00; }
.yellow-box { background: #ff0; }
.green-box { background: #0f0; }
.blue-box { background: #00f; }
.white-box { background: #fff; }
.black-box { background: #000; }

/* Layout tabs */
.layouts { flex: none; display: flex; height: 15px; margin-bottom: 2px; }
.layouts button { width: 18px; display: flex; align-items: center; justify-content: center; border: 1px solid #a0a0a0; border-width: 0 1px 1px 0; background: #f8f8f8; }
.layouts button svg { width: 8px; height: 8px; }
.sheet { position: relative; z-index: 0; height: 14px; margin-left: 4px; padding: 0 4px; font: 10px/14px "Liberation Mono", "Noto Sans CJK SC", monospace; }
.sheet::before, .sheet::after { content: ""; position: absolute; z-index: -1; top: 0; bottom: 0; border: 1px solid #000; border-top: 0; background: #fff; }
.sheet::before { left: -2px; right: 25%; border-right: 0; transform: skewX(18deg); }
.sheet::after { left: 25%; right: -2px; border-left: 0; transform: skewX(-18deg); }
.sheet.current { margin-left: 7px; color: #fff; font-size: 12px; }
.sheet.current::before, .sheet.current::after { background: #000; }

/* Bottom toolbar and command line */
.bottom { flex: none; }
.command { display: flex; height: 15px; margin-top: 3px; padding-top: 10px; border-top: 2px solid #888; overflow: hidden; }
.command .log { flex: 1; height: 16px; border: solid #666; border-width: 2px 0 0 2px; background: #fff; font: 12px/14px "Liberation Mono", "Noto Sans CJK SC", monospace; }
```
